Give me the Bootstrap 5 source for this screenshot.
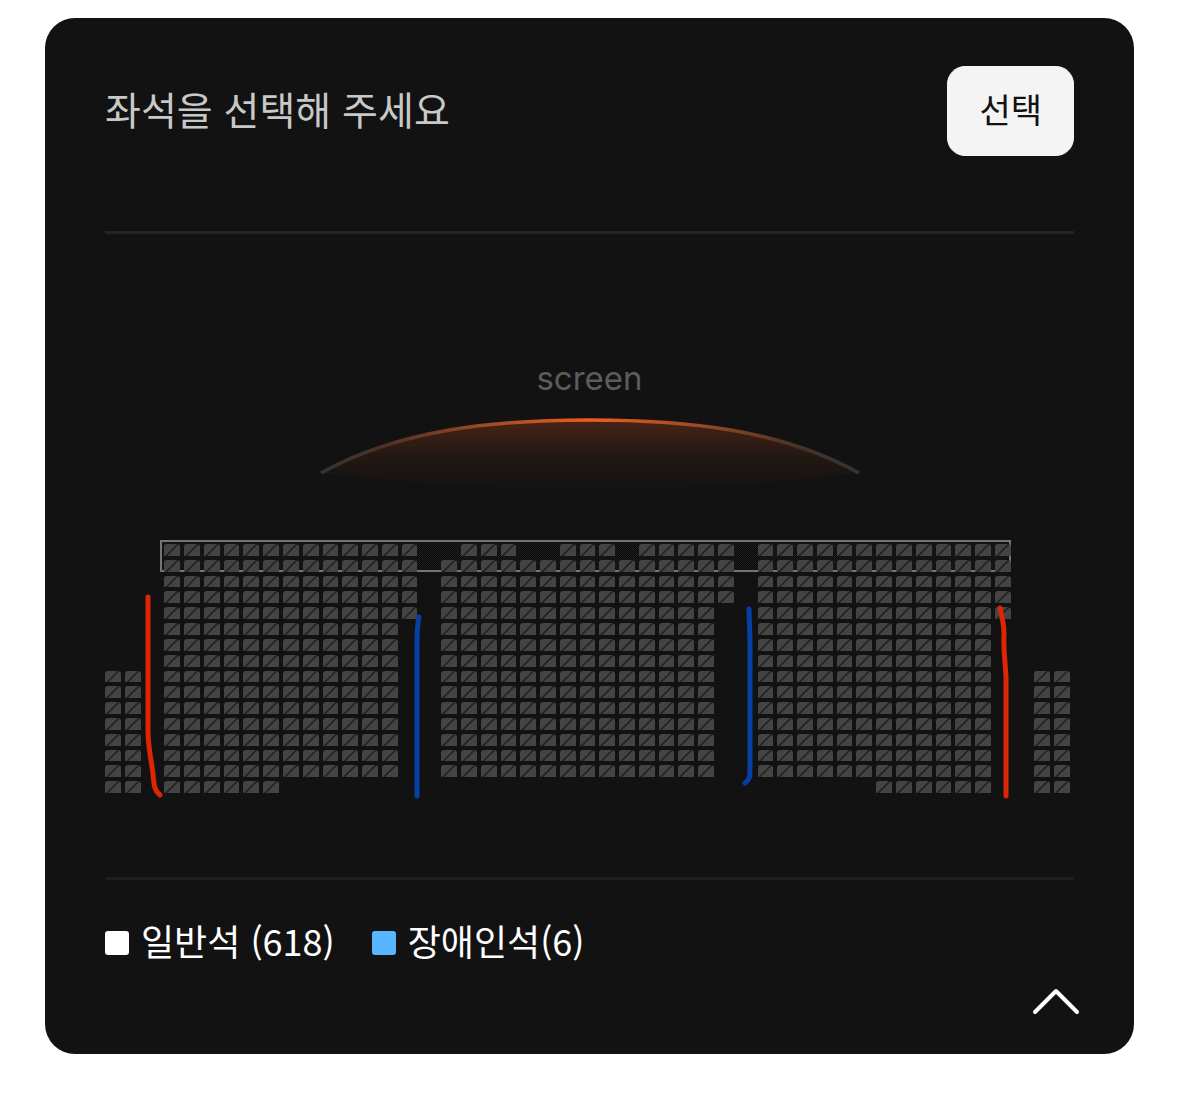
<!DOCTYPE html>
<html lang="ko">
<head>
<meta charset="utf-8">
<meta name="viewport" content="width=device-width, initial-scale=1">
<title>좌석 선택</title>
<link href="https://cdn.jsdelivr.net/npm/bootstrap@5.3.0/dist/css/bootstrap.min.css" rel="stylesheet">
<style>
  body { background: #fff; font-family: "Noto Sans CJK KR", sans-serif; }
  .page { padding: 18px 45px 42px; }
  .panel { background: #121212; border-radius: 30px; padding: 48px 60px 39px; }
  .prompt { color: #c8c8c8; font-size: 39px; line-height: 60px; padding-bottom: 6px; }
  .btn-pick { --bs-btn-bg: #f4f4f4; --bs-btn-color: #121212; --bs-btn-border-color: #f4f4f4;
    --bs-btn-hover-bg: #fff; --bs-btn-hover-color: #121212;
    --bs-btn-padding-x: 31px; --bs-btn-padding-y: 0px; --bs-btn-font-size: 34px; --bs-btn-border-radius: 18px;
    line-height: 84px; padding-bottom: 4px; }
  .rule { border-top: 3px solid #242424; opacity: 1; margin: 75px 0 0; }
  .rule-low { border-color: #1e1e1e; margin-top: 84px; }
  .stage { padding-top: 123px; }
  .stage-name { font-family: Inter, sans-serif; color: #5c5c5c; font-size: 33px; line-height: 42px; }
  .arc { width: 540px; max-width: 100%; margin-top: 19px; }
  .seat-map { margin-top: 52px; padding-right: 4px; }
  .seats { display: grid; gap: 4px; grid-template-columns: repeat(49, minmax(0, 1fr));
    grid-template-rows: repeat(16, minmax(0, 1fr)); aspect-ratio: 965 / 249; }
  .seat { padding: 0; border: 0; border-radius: 3px 3px 0 0; min-width: 0; min-height: 0;
    background: linear-gradient(135deg, #444 44%, #242424 47%, #242424 53%, #444 56%); }
  .zone { grid-area: 1 / 4 / 3 / 47; margin: -4px 0 0 -4px; border: 2px solid #747474;
    background: repeating-conic-gradient(#0c0c0c 0 25%, #1c1c1c 0 50%) 0 0 / 2px 2px; }
  .pen { fill: none; stroke-width: 5; stroke-linecap: round; stroke-linejoin: round; }
  .pen-red { stroke: #dc2604; }
  .pen-blue { stroke: #0640a4; }
  .legend { gap: 8px 37px; margin-top: 33px; color: #fff; font-size: 36px; line-height: 54px; }
  .legend-text { padding-bottom: 6px; }
  .swatch { width: 24px; height: 24px; border-radius: 3px; background: #fff; }
  .swatch-blue { background: #58b6ff; }
  .btn-up { --bs-btn-padding-x: 0px; --bs-btn-padding-y: 0px; --bs-btn-border-width: 0px; margin: 14px -6px 0 0; line-height: 1; }
</style>
</head>
<body>
<main class="page">
  <section class="panel">
    <header class="d-flex justify-content-between align-items-center gap-3">
      <h1 class="prompt fw-normal mb-0">좌석을 선택해 주세요</h1>
      <button type="button" class="btn btn-pick flex-shrink-0">선택</button>
    </header>
    <hr class="rule">
    <div class="stage d-flex flex-column align-items-center">
      <div class="stage-name">screen</div>
      <svg class="arc" viewBox="0 0 540 74" aria-hidden="true">
        <defs>
          <linearGradient id="edge"><stop offset="0" stop-color="#333"/><stop offset=".12" stop-color="#4c3226"/><stop offset=".3" stop-color="#9c4a26"/><stop offset=".5" stop-color="#f05c20"/><stop offset=".7" stop-color="#9c4a26"/><stop offset=".88" stop-color="#4c3226"/><stop offset="1" stop-color="#333"/></linearGradient>
          <linearGradient id="glow" x1="0" y1="0" x2="0" y2="1"><stop offset="0" stop-color="#f05c20" stop-opacity=".24"/><stop offset=".5" stop-color="#f05c20" stop-opacity=".08"/><stop offset="1" stop-color="#f05c20" stop-opacity="0"/></linearGradient>
        </defs>
        <path d="M1 55C80 11 175 2 270 2S460 11 539 55Q270 89 1 55Z" fill="url(#glow)"/>
        <path d="M1 55C80 11 175 2 270 2S460 11 539 55" fill="none" stroke="url(#edge)" stroke-width="3.5"/>
      </svg>
    </div>
    <div class="seat-map">
      <div class="position-relative">
        <div class="seats" id="seats"><div class="zone"></div></div>
        <svg class="position-absolute top-0 start-0 w-100 h-100 overflow-visible pe-none" viewBox="0 0 965 249" aria-hidden="true">
          <path class="pen pen-red" d="M43 53V188C43 202 46 214 48 230C49 243 50 247 55 251"/>
          <path class="pen pen-blue" d="M314 73C312 82 312 90 312 100V252"/>
          <path class="pen pen-blue" d="M644 65L645 96V226C645 234 644 236 640 239"/>
          <path class="pen pen-red" d="M895 64C897 72 899 80 899 90C898 110 901 120 901 136V252"/>
        </svg>
      </div>
    </div>
    <hr class="rule rule-low">
    <ul class="legend list-unstyled d-flex flex-wrap mb-0">
      <li class="d-flex align-items-center"><span class="swatch me-2"></span><span class="legend-text ms-1">일반석 (618)</span></li>
      <li class="d-flex align-items-center"><span class="swatch swatch-blue me-2"></span><span class="legend-text ms-1">장애인석(6)</span></li>
    </ul>
    <div class="d-flex justify-content-end">
      <button type="button" class="btn btn-up" aria-label="접기">
        <svg class="d-block" width="48" height="28" viewBox="0 0 48 28" fill="none" stroke="#fff" stroke-width="4" stroke-linecap="round" stroke-linejoin="round"><path d="M3 25L24 4L45 25"/></svg>
      </button>
    </div>
  </section>
</main>
<script src="https://cdn.jsdelivr.net/npm/bootstrap@5.3.0/dist/js/bootstrap.bundle.min.js"></script>
<script>
  // Runs of seats: [first row, last row, first column, last column]
  const runs = [
    [8, 15, 0, 1],
    [0, 4, 3, 15], [5, 14, 3, 14], [15, 15, 3, 8],
    [0, 0, 18, 20], [0, 0, 23, 25], [0, 0, 27, 31], [1, 3, 17, 31], [4, 14, 17, 30],
    [0, 4, 33, 45], [5, 14, 33, 44], [15, 15, 39, 44],
    [8, 15, 47, 48]
  ];
  const seats = document.getElementById('seats');
  for (const [r0, r1, c0, c1] of runs) {
    for (let r = r0; r <= r1; r++) {
      for (let c = c0; c <= c1; c++) {
        const seat = document.createElement('button');
        seat.type = 'button';
        seat.className = 'seat';
        seat.disabled = true;
        seat.setAttribute('aria-label', String.fromCharCode(65 + r) + (c + 1));
        seat.style.gridArea = (r + 1) + ' / ' + (c + 1);
        seats.append(seat);
      }
    }
  }
</script>
</body>
</html>
